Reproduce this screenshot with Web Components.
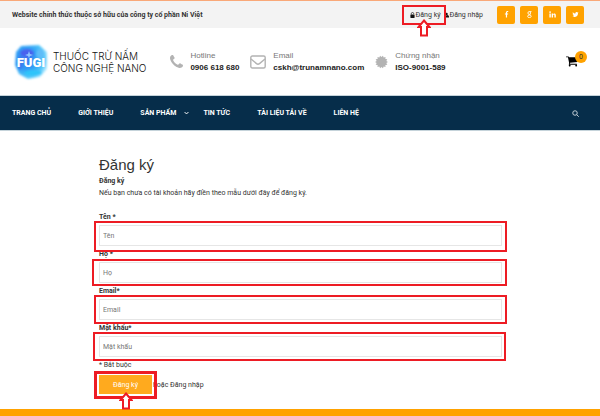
<!DOCTYPE html>
<html lang="vi">
<head>
<meta charset="utf-8">
<meta name="viewport" content="width=device-width, initial-scale=1">
<title>Đăng ký</title>
<style>
  :root {
    --accent: #ffa200;
    --navy: #062d4a;
    --mark: #ed1c24;
    --arial: "Liberation Sans", Arial, sans-serif;
  }
  body {
    margin: 0;
    min-height: 100vh;
    display: flex;
    flex-direction: column;
    background: #fff;
    color: #333;
    font: 7px/12px Roboto, "Liberation Sans", sans-serif;
  }
</style>
</head>
<body>
<top-bar></top-bar>
<site-header></site-header>
<main-nav></main-nav>
<register-form></register-form>
<site-footer></site-footer>

<script>
const ICONS = {
  unlock: ['0 0 12 14', '<path d="M3 6V4a3 3 0 0 1 6 0v1" fill="none" stroke="currentColor" stroke-width="1.6"/><rect x="1" y="6" width="10" height="8" rx="1"/>'],
  user: ['0 0 14 14', '<circle cx="7" cy="4" r="3.6"/><path d="M0 14v-2c0-3 2-5 4-5 2 1.600 4 1.600 6 0 2 0 4 2 4 5v2z"/>'],
  facebook: ['0 0 1792 1792', '<path d="M1343 12v264h-157q-86 0-116 36t-30 108v189h293l-39 296h-254v759h-306v-759h-255v-296h255v-218q0-186 104-288.5t277-102.5q147 0 228 12z"/>'],
  google: ['0 0 14 14', '<g fill="none" stroke="currentColor" stroke-width="1.7"><ellipse cx="6.500" cy="4" rx="2.600" ry="2.900"/><ellipse cx="6.800" cy="10.600" rx="3.600" ry="2.500"/><path d="M7 1.200h4M7.500 6.500l1.500 2"/></g>'],
  linkedin: ['0 0 14 14', '<circle cx="2.200" cy="2.200" r="1.700"/><path d="M.8 5h2.800v8H.8zM5.300 5H8v1.200C8.600 5.300 9.500 4.800 10.600 4.800c2 0 3 1.300 3 3.600V13h-2.800V8.800c0-1-.4-1.700-1.300-1.700S8.100 7.800 8.100 8.800V13H5.300z"/>'],
  twitter: ['0 0 1792 1792', '<path d="M1684 408q-67 98-162 167 1 14 1 42 0 130-38 259.500t-115.500 248.500-184.500 210.500-258 146-323 54.500q-271 0-496-145 35 4 78 4 225 0 401-138-105-2-188-64.500t-114-159.500q33 5 61 5 43 0 85-11-112-23-185.500-111.500t-73.500-205.500v-4q68 38 146 41-66-44-105-115t-39-154q0-88 44-163 121 149 294.500 238.500t371.500 99.500q-8-38-8-74 0-134 94.500-228.500t228.500-94.500q140 0 236 102 109-21 205-78-37 115-142 178 93-10 186-50z"/>'],
  phone: ['192 192 1408 1408', '<path d="M1600 1240q0 27-10 70.500t-21 68.500q-21 50-122 106-94 51-186 51-27 0-53-3.500t-57-12.500-47-14.500-55.500-20.500-49.500-18q-98-35-175-83-127-79-264-216t-216-264q-48-77-83-175-3-9-18-49.500t-20.500-55.500-14.500-47-12.500-57-3.500-53q0-92 51-186 56-101 106-122 25-11 68.500-21t70.500-10q14 0 21 3 18 6 53 76 11 19 30 54t35 63.500 31 53.500q3 4 17.500 25t21.500 35.500 7 28.500q0 20-28.500 50t-62 55-62 53-28.500 46q0 9 5 22.500t8.500 20.500 14 24 11.500 19q76 137 174 235t235 174q2 1 19 11.500t24 14 20.500 8.500 22.500 5q18 0 46-28.500t53-62 55-62 50-28.500q14 0 28.500 7t35.500 21.500 25 17.500q25 15 53.500 31t63.500 35 54 30q70 35 76 53 3 7 3 21z"/>'],
  envelope: ['0 0 16 14', '<g fill="none" stroke="currentColor" stroke-width="1.400"><rect x=".8" y="1" width="14.400" height="12" rx="1.500"/><path d="M1 4l5.500 4.600c1 .8 2 .8 3 0L15 4"/></g>'],
  cart: ['64 256 1664 1408', '<path d="M704 1536q0 52-38 90t-90 38-90-38-38-90 38-90 90-38 90 38 38 90zm896 0q0 52-38 90t-90 38-90-38-38-90 38-90 90-38 90 38 38 90zm128-1088v512q0 24-16.500 42.500t-40.500 21.500l-1044 122q13 60 13 70 0 16-24 64h920q26 0 45 19t19 45-19 45-45 19h-1024q-26 0-45-19t-19-45q0-11 8-31.500t16-36 21.500-40 15.500-29.500l-177-823h-204q-26 0-45-19t-19-45 19-45 45-19h256q16 0 28.500 6.500t19.500 15.500 13 24.500 8 26 5.500 29.500 4.500 26h1201q26 0 45 19t19 45z"/>'],
  search: ['0 0 14 14', '<g fill="none" stroke="currentColor" stroke-width="1.800"><circle cx="6" cy="6" r="4.500"/><path d="M9.500 9.500l4 4"/></g>'],
  chevron: ['0 0 8 6', '<path d="M1 1.500l3 3 3-3" fill="none" stroke="currentColor" stroke-width="1.600"/>'],
};

// 14-point seal, drawn from alternating radii
const seal = Array.from({ length: 28 }, (_, i) => {
  const r = i % 2 ? 5.3 : 7;
  const a = i * Math.PI / 14;
  return `${(7 + r * Math.cos(a)).toFixed(2)},${(7 + r * Math.sin(a)).toFixed(2)}`;
}).join(' ');
ICONS.certificate = ['0 0 14 14', `<polygon points="${seal}"/>`];

class SiteIcon extends HTMLElement {
  connectedCallback() {
    const [viewBox, body] = ICONS[this.getAttribute('name')];
    this.attachShadow({ mode: 'open' });
    this.shadowRoot.innerHTML = `
      <style>
        :host {
          display: inline-block;
          flex: none;
          width: 7px;
          height: 7px;
        }
        svg {
          display: block;
          width: 100%;
          height: 100%;
          fill: currentColor;
        }
      </style>
      <svg viewBox="${viewBox}" aria-hidden="true">${body}</svg>
    `;
  }
}
customElements.define('site-icon', SiteIcon);

// Red frame laid over whatever it wraps, with an optional arrow below
class HighlightMark extends HTMLElement {
  connectedCallback() {
    this.attachShadow({ mode: 'open' });
    this.shadowRoot.innerHTML = `
      <style>
        :host {
          display: block;
          position: relative;
        }
        .frame {
          position: absolute;
          inset: var(--frame, -4px -5px -4px -5px);
          border: var(--frame-width, 2px) solid var(--mark);
          pointer-events: none;
          z-index: 1;
        }
        .arrow {
          position: absolute;
          left: 50%;
          top: 100%;
          width: 14px;
          height: 18px;
          margin: -4px 0 0 -7px;
        }
      </style>
      <slot></slot>
      <div class="frame">
        ${this.hasAttribute('arrow') ? `
        <svg class="arrow" viewBox="0 0 14 18" aria-hidden="true">
          <path d="M7 1.500L12.500 8H10v8.500H4V8H1.500z" fill="#fff" stroke="#ed1c24" stroke-width="2"/>
        </svg>` : ''}
      </div>
    `;
  }
}
customElements.define('highlight-mark', HighlightMark);

class TopBar extends HTMLElement {
  connectedCallback() {
    this.attachShadow({ mode: 'open' });
    this.shadowRoot.innerHTML = `
      <style>
        :host {
          display: flex;
          align-items: center;
          height: 27px;
          padding: 0 16px 0 12px;
          border-top: 1px solid #f9a878;
          background: #f3f3f3;
        }
        strong {
          margin-right: auto;
        }
        a {
          color: #333;
          text-decoration: none;
        }
        .account {
          display: flex;
          gap: 3px;
        }
        .account a {
          display: flex;
          align-items: center;
          gap: 1px;
        }
        .account site-icon {
          width: 5px;
          height: 6px;
          color: #111;
        }
        highlight-mark {
          --frame: -4px -5px -4px -8px;
          --frame-width: 2px;
        }
        .social {
          display: flex;
          gap: 5px;
          margin-left: 14px;
        }
        .social a {
          display: flex;
          align-items: center;
          justify-content: center;
          width: 18px;
          height: 18px;
          border-radius: 2px;
          background: var(--accent);
          color: #fff;
        }
      </style>
      <strong>Website chính thức thuộc sở hữu của công ty cổ phần Ni Việt</strong>
      <div class="account">
        <highlight-mark arrow><a href="#"><site-icon name="unlock"></site-icon>Đăng ký</a></highlight-mark>
        <a href="#"><site-icon name="user"></site-icon>Đăng nhập</a>
      </div>
      <div class="social">
        <a href="#" aria-label="Facebook"><site-icon name="facebook"></site-icon></a>
        <a href="#" aria-label="Google"><site-icon name="google"></site-icon></a>
        <a href="#" aria-label="LinkedIn"><site-icon name="linkedin"></site-icon></a>
        <a href="#" aria-label="Twitter"><site-icon name="twitter"></site-icon></a>
      </div>
    `;
  }
}
customElements.define('top-bar', TopBar);

class SiteLogo extends HTMLElement {
  connectedCallback() {
    this.attachShadow({ mode: 'open' });
    this.shadowRoot.innerHTML = `
      <style>
        :host {
          display: block;
        }
        a {
          display: flex;
          align-items: center;
          gap: 4px;
          color: #111;
          text-decoration: none;
          font: 300 10px/12px Inter, "Liberation Sans", sans-serif;
          white-space: nowrap;
        }
        svg {
          flex: none;
          width: 36px;
          height: 38px;
        }
      </style>
      <a href="#">
        <svg viewBox="0 0 36 38" role="img" aria-label="FUGI">
          <defs>
            <radialGradient id="glow" cx=".35" cy=".4" r=".7">
              <stop offset="0" stop-color="#3c78f2"/>
              <stop offset=".45" stop-color="#2f9df5"/>
              <stop offset=".8" stop-color="#52c8fa"/>
              <stop offset="1" stop-color="#b9ecff"/>
            </radialGradient>
            <filter id="soft" x="-20%" y="-20%" width="140%" height="140%"><feGaussianBlur stdDeviation="1.1"/></filter>
          </defs>
          <g filter="url(#soft)">
            <path d="M8 3l18-1 8 7v17l-7 8-12 2-9-5-4-9 1-13z" fill="url(#glow)"/>
            <ellipse cx="14" cy="10" rx="7" ry="4" fill="#4a62ee"/>
            <ellipse cx="20" cy="30" rx="9" ry="3" fill="#2fc4fa"/>
            <ellipse cx="7" cy="20" rx="3" ry="7" fill="#3a7df0"/>
            <ellipse cx="27" cy="11" rx="4" ry="5" fill="#5dbcf8"/>
          </g>
          <path d="M16 8l1 3 3 1-3 1-1 2-1-2-3-1 3-1z" fill="#8ec4ff"/>
          <text x="18" y="24" text-anchor="middle" fill="#fff" font-family="Roboto, Liberation Sans, sans-serif" font-weight="900" font-size="13">FUGI</text>
        </svg>
        <span>THUỐC TRỪ NẤM<br>CÔNG NGHỆ NANO</span>
      </a>
    `;
  }
}
customElements.define('site-logo', SiteLogo);

class ContactItem extends HTMLElement {
  connectedCallback() {
    this.attachShadow({ mode: 'open' });
    this.shadowRoot.innerHTML = `
      <style>
        :host {
          display: flex;
          align-items: center;
          gap: 7px;
          font-family: var(--arial);
          font-size: 8px;
          white-space: nowrap;
        }
        site-icon {
          width: var(--icon-width, 13px);
          height: 14px;
          color: #b3b3b3;
        }
        .label {
          display: block;
          color: #777;
        }
        strong {
          display: block;
          color: #222;
        }
      </style>
      <site-icon name="${this.getAttribute('icon')}"></site-icon>
      <div><span class="label">${this.getAttribute('label')}</span><strong><slot></slot></strong></div>
    `;
  }
}
customElements.define('contact-item', ContactItem);

class SiteHeader extends HTMLElement {
  connectedCallback() {
    this.attachShadow({ mode: 'open' });
    this.shadowRoot.innerHTML = `
      <style>
        :host {
          display: flex;
          align-items: center;
          height: 67px;
          padding: 0 13px;
        }
        .contacts {
          display: flex;
          gap: 11px;
          margin-left: 24px;
        }
        .mail {
          --icon-width: 16px;
        }
        .cart {
          position: relative;
          margin-left: auto;
          padding-right: 9px;
          color: #000;
        }
        .cart site-icon {
          display: block;
          width: 12px;
          height: 11px;
        }
        .count {
          position: absolute;
          right: 0;
          bottom: 4px;
          width: 12px;
          height: 12px;
          border-radius: 50%;
          background: var(--accent);
          color: #333;
          text-align: center;
        }
      </style>
      <site-logo></site-logo>
      <div class="contacts">
        <contact-item icon="phone" label="Hotline">0906 618 680</contact-item>
        <contact-item class="mail" icon="envelope" label="Email">cskh@trunamnano.com</contact-item>
        <contact-item icon="certificate" label="Chứng nhận">ISO-9001-589</contact-item>
      </div>
      <a class="cart" href="#" aria-label="Giỏ hàng"><site-icon name="cart"></site-icon><span class="count">0</span></a>
    `;
  }
}
customElements.define('site-header', SiteHeader);

class MainNav extends HTMLElement {
  connectedCallback() {
    this.attachShadow({ mode: 'open' });
    this.shadowRoot.innerHTML = `
      <style>
        :host {
          display: block;
          border: solid #c5d3da;
          border-width: 1px 0;
          background: var(--navy);
        }
        nav {
          display: flex;
          align-items: center;
          height: 34px;
          padding: 0 21px 0 12px;
          color: #fff;
        }
        ul {
          display: flex;
          margin: 0;
          padding: 0;
          list-style: none;
          font-weight: 700;
        }
        li {
          display: flex;
          align-items: center;
          white-space: nowrap;
        }
        .gap {
          display: flex;
          justify-content: center;
          width: 27px;
        }
        .gap site-icon {
          width: 5px;
          height: 4px;
          margin-right: 6px;
        }
        a {
          color: inherit;
          text-decoration: none;
        }
        button {
          display: flex;
          margin-left: auto;
          padding: 0;
          border: 0;
          background: none;
          color: #d5dde2;
        }
      </style>
      <nav>
        <ul>
          <li><a href="#">TRANG CHỦ</a><span class="gap"></span></li>
          <li><a href="#">GIỚI THIỆU</a><span class="gap"></span></li>
          <li><a href="#">SẢN PHẨM</a><span class="gap"><site-icon name="chevron"></site-icon></span></li>
          <li><a href="#">TIN TỨC</a><span class="gap"></span></li>
          <li><a href="#">TÀI LIỆU TẢI VỀ</a><span class="gap"></span></li>
          <li><a href="#">LIÊN HỆ</a></li>
        </ul>
        <button type="button" aria-label="Tìm kiếm"><site-icon name="search"></site-icon></button>
      </nav>
    `;
  }
}
customElements.define('main-nav', MainNav);

class TextField extends HTMLElement {
  connectedCallback() {
    const label = this.getAttribute('label');
    this.attachShadow({ mode: 'open' });
    this.shadowRoot.innerHTML = `
      <style>
        :host {
          display: block;
        }
        label {
          display: block;
          font-weight: 700;
          line-height: 16px;
        }
        input {
          display: block;
          box-sizing: border-box;
          width: 100%;
          height: 21px;
          padding: 0 3px;
          border: 1px solid #e6e6e6;
          background: #fff;
          color: #333;
          font: inherit;
        }
        input::placeholder {
          color: #777;
          opacity: 1;
        }
      </style>
      <label for="field">${label}${this.getAttribute('suffix')}</label>
      <highlight-mark><input id="field" type="${this.getAttribute('type') || 'text'}" placeholder="${label}"></highlight-mark>
    `;
  }
}
customElements.define('text-field', TextField);

class RegisterForm extends HTMLElement {
  connectedCallback() {
    this.attachShadow({ mode: 'open' });
    this.shadowRoot.innerHTML = `
      <style>
        :host {
          display: block;
          padding: 23px 98px 15px 99px;
        }
        h1 {
          margin: 0;
          font: 400 15px/21px var(--arial);
        }
        p {
          margin: 0;
        }
        .intro {
          margin-bottom: 10px;
        }
        .first {
          --frame: -4px -5px -6px -5px;
        }
        .second {
          --frame: -3px -5px -3px -7px;
        }
        .last {
          --frame: -4px -4px -4px -6px;
        }
        .note {
          line-height: 16px;
        }
        .actions {
          display: flex;
          align-items: center;
          gap: 1px;
          margin-top: 2px;
        }
        .actions highlight-mark {
          --frame: -4px -5px -5px -5px;
          --frame-width: 3px;
        }
        button {
          display: block;
          width: 53px;
          height: 19px;
          padding: 0;
          border: 0;
          background: #ffaa1e;
          color: #fff;
          font: inherit;
        }
        a {
          color: inherit;
          text-decoration: none;
        }
      </style>
      <h1>Đăng ký</h1>
      <p><strong>Đăng ký</strong></p>
      <p class="intro">Nếu bạn chưa có tài khoản hãy điền theo mẫu dưới đây để đăng ký.</p>
      <form>
        <text-field class="first" label="Tên" suffix=" *"></text-field>
        <text-field class="second" label="Họ" suffix=" *"></text-field>
        <text-field label="Email" suffix="*" type="email"></text-field>
        <text-field class="last" label="Mật khẩu" suffix="*" type="password"></text-field>
        <p class="note">* Bắt buộc</p>
        <div class="actions">
          <highlight-mark arrow><button type="button">Đăng ký</button></highlight-mark>
          <span>hoặc <a href="#">Đăng nhập</a></span>
        </div>
      </form>
    `;
  }
}
customElements.define('register-form', RegisterForm);

class SiteFooter extends HTMLElement {
  connectedCallback() {
    this.attachShadow({ mode: 'open' });
    this.shadowRoot.innerHTML = `
      <style>
        :host {
          display: block;
          flex: 1 0 8px;
          background: var(--accent);
        }
      </style>
      <footer></footer>
    `;
  }
}
customElements.define('site-footer', SiteFooter);
</script>
</body>
</html>
